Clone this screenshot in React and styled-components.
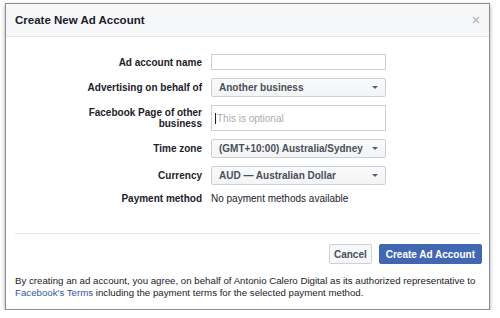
import React from "react";
import styled, { createGlobalStyle } from "styled-components";

const GlobalStyle = createGlobalStyle`
  body {
    margin: 0;
    background: #fff;
    font-family: "Liberation Sans", Helvetica, Arial, sans-serif;
  }
`;

const Page = styled.div`
  padding: 3px 0 0 5px;
`;

const Dialog = styled.div`
  width: 485px;
  box-sizing: border-box;
  background: #fff;
  border: 1px solid #8d8d8d;
  box-shadow: 0 2px 4px rgba(0, 0, 0, 0.35);
`;

const Header = styled.div`
  height: 32px;
  display: flex;
  align-items: center;
  justify-content: space-between;
  padding: 0 8px 0 9px;
  background: #f6f7f9;
  border-bottom: 1px solid #e5e5e5;
`;

const Title = styled.div`
  font-size: 11.5px;
  font-weight: bold;
  color: #1d2129;
`;

const Close = styled.button`
  border: 0;
  background: none;
  padding: 0;
  width: 10px;
  height: 10px;
  display: flex;
  align-items: center;
  justify-content: center;
`;

const Body = styled.div`
  padding-top: 17px;
`;

const Form = styled.div`
  display: grid;
  grid-template-columns: 196px 175px;
  column-gap: 9px;
  row-gap: 8px;
  align-items: center;
`;

const Label = styled.div`
  justify-self: end;
  max-width: 120px;
  text-align: right;
  font-size: 10px;
  font-weight: bold;
  line-height: 11px;
  color: #1d2129;
`;

const Input = styled.div`
  box-sizing: border-box;
  height: ${(p) => p.$h || 16}px;
  border: 1px solid #ccd0d5;
  background: #fff;
  display: flex;
  align-items: center;
  padding-left: 3px;
  font-size: 10px;
  color: #a7abb1;
`;

const Caret = styled.span`
  width: 1px;
  height: 11px;
  background: #1d2129;
  margin-right: 1px;
`;

const Select = styled.div`
  box-sizing: border-box;
  height: 19px;
  border: 1px solid #ccd0d5;
  border-radius: 2px;
  background: linear-gradient(#f9fafb, #f3f4f6);
  display: flex;
  align-items: center;
  justify-content: space-between;
  padding: 0 7px 0 7px;
  font-size: 10px;
  font-weight: bold;
  color: #4b4f56;
`;

const Arrow = styled.span`
  width: 0;
  height: 0;
  border-left: 3.5px solid transparent;
  border-right: 3.5px solid transparent;
  border-top: 3.5px solid #5b5f66;
`;

const Value = styled.div`
  font-size: 10px;
  color: #1d2129;
`;

const Divider = styled.div`
  margin: 29px 9px 0 9px;
  border-top: 1px solid #e5e5e5;
`;

const Actions = styled.div`
  display: flex;
  justify-content: flex-end;
  gap: 7px;
  padding: 10px 7px 0 0;
`;

const Button = styled.button`
  height: 20px;
  box-sizing: border-box;
  padding: 0 ${(p) => (p.$primary ? 6 : 4)}px;
  border-radius: 2px;
  border: 1px solid ${(p) => (p.$primary ? "#4267b2" : "#ced0d4")};
  background: ${(p) => (p.$primary ? "#4267b2" : "#f6f7f9")};
  color: ${(p) => (p.$primary ? "#fff" : "#4b4f56")};
  font-family: inherit;
  font-size: 10px;
  font-weight: bold;
`;

const Terms = styled.p`
  margin: 0;
  padding: 11px 9px 10px 9px;
  font-size: 9.7px;
  line-height: 12px;
  color: #1d2129;
`;

const Link = styled.a`
  color: #365899;
  text-decoration: none;
`;

export default function App() {
  return (
    <>
      <GlobalStyle />
      <Page>
        <Dialog>
          <Header>
            <Title>Create New Ad Account</Title>
            <Close aria-label="Close">
              <svg width="8" height="8" viewBox="0 0 8 8">
                <path d="M1 1L7 7M7 1L1 7" stroke="#b4b7bc" strokeWidth="1.3" />
              </svg>
            </Close>
          </Header>
          <Body>
            <Form>
              <Label>Ad account name</Label>
              <Input />
              <Label>Advertising on behalf of</Label>
              <Select>
                Another business
                <Arrow />
              </Select>
              <Label>Facebook Page of other business</Label>
              <Input $h={26}>
                <Caret />
                This is optional
              </Input>
              <Label>Time zone</Label>
              <Select>
                (GMT+10:00) Australia/Sydney
                <Arrow />
              </Select>
              <Label>Currency</Label>
              <Select>
                AUD — Australian Dollar
                <Arrow />
              </Select>
              <Label>Payment method</Label>
              <Value>No payment methods available</Value>
            </Form>
            <Divider />
            <Actions>
              <Button>Cancel</Button>
              <Button $primary>Create Ad Account</Button>
            </Actions>
            <Terms>
              By creating an ad account, you agree, on behalf of Antonio Calero
              Digital as its authorized representative to{" "}
              <Link href="#">Facebook's Terms</Link> including the payment terms
              for the selected payment method.
            </Terms>
          </Body>
        </Dialog>
      </Page>
    </>
  );
}
